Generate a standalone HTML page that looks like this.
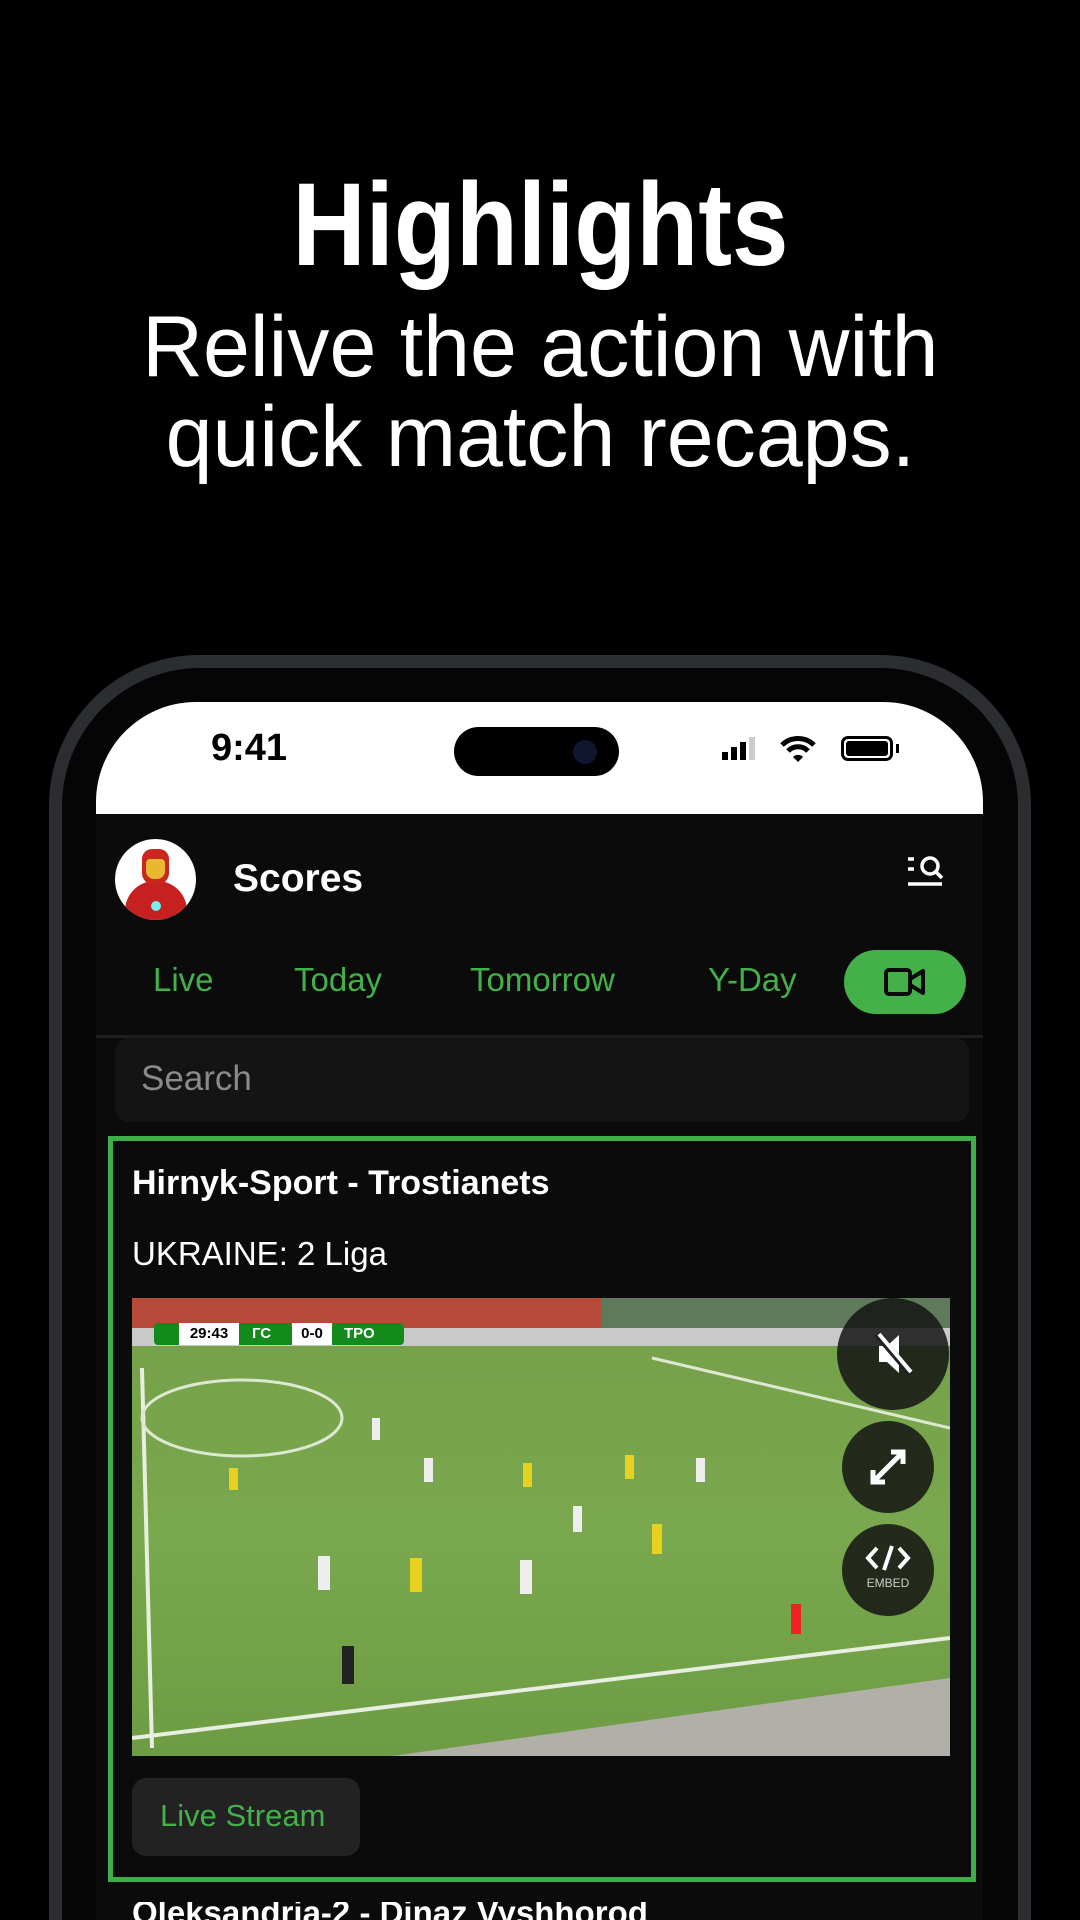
<!DOCTYPE html>
<html style="width:1080px;height:1920px;overflow:hidden"><head><meta charset="utf-8"><style>
*{margin:0;padding:0;box-sizing:border-box}
html,body{width:1080px;height:1920px;overflow:hidden}
body{background:#000;position:relative;font-family:"Liberation Sans",sans-serif;color:#fff}
.abs{position:absolute}
.t{position:absolute;left:0;width:1080px;text-align:center;white-space:nowrap}
.t span{display:inline-block}
</style></head><body>
<div class="t" style="top:160px;font-size:118px;font-weight:bold;line-height:130px"><span style="transform:scaleX(.86)">Highlights</span></div>
<div class="t" style="top:302px;font-size:86px;line-height:90px"><span style="transform:scaleX(.98)">Relive the action with</span></div>
<div class="t" style="top:392px;font-size:86px;line-height:90px"><span style="transform:scaleX(.98)">quick match recaps.</span></div>

<div class="abs" style="left:0;top:0;width:1080px;height:1920px;overflow:hidden">
<div class="abs" style="left:49px;top:655px;width:982px;height:1265px;border-radius:150px 150px 0 0;background:#2b2d30"></div>
<div class="abs" style="left:62px;top:668px;width:956px;height:1252px;border-radius:138px 138px 0 0;background:#050505"></div>
<div class="abs" style="left:96px;top:702px;width:887px;height:1218px;border-radius:100px 100px 0 0;background:#0b0b0b;overflow:hidden">
  <div class="abs" style="left:0;top:0;width:887px;height:112px;background:#fff"></div>
  <div class="abs" style="left:115px;top:25px;font-size:38px;font-weight:bold;color:#000">9:41</div>
  <div class="abs" style="left:358px;top:25px;width:165px;height:49px;border-radius:25px;background:#000"></div>
  <div class="abs" style="left:477px;top:38px;width:24px;height:24px;border-radius:12px;background:#101530"></div>
  <div class="abs" style="left:626px;top:50px;width:6px;height:8px;background:#000"></div>
  <div class="abs" style="left:635px;top:45px;width:6px;height:13px;background:#000"></div>
  <div class="abs" style="left:644px;top:40px;width:6px;height:18px;background:#000"></div>
  <div class="abs" style="left:653px;top:35px;width:6px;height:23px;background:#ccc"></div>
  <svg class="abs" style="left:684px;top:33px" width="36" height="28" viewBox="0 0 36 28"><path d="M2 10a23 23 0 0 1 32 0" stroke="#000" stroke-width="5" fill="none"/><path d="M8 16a14 14 0 0 1 20 0" stroke="#000" stroke-width="5" fill="none"/><path d="M13 22l5 5 5-5a7 7 0 0 0-10 0z" fill="#000"/></svg>
  <div class="abs" style="left:745px;top:34px;width:52px;height:25px;border:3px solid #000;border-radius:7px;padding:2px"><div style="width:100%;height:100%;background:#000;border-radius:3px"></div></div>
  <div class="abs" style="left:800px;top:42px;width:3px;height:9px;background:#000"></div>

  <div class="abs" style="left:19px;top:137px;width:81px;height:81px;border-radius:50%;background:#fff;overflow:hidden">
    <div class="abs" style="left:10px;top:42px;width:62px;height:45px;border-radius:30px 30px 0 0;background:#c62020"></div>
    <div class="abs" style="left:27px;top:10px;width:27px;height:36px;border-radius:10px 10px 12px 12px;background:#c9261d"></div>
    <div class="abs" style="left:31px;top:20px;width:19px;height:20px;border-radius:4px 4px 8px 8px;background:#e9b830"></div>
    <div class="abs" style="left:36px;top:62px;width:10px;height:10px;border-radius:50%;background:#7ee"></div>
  </div>
  <div class="abs" style="left:137px;top:155px;font-size:39px;font-weight:bold;color:#fff">Scores</div>
  <svg class="abs" style="left:810px;top:152px" width="40" height="36" viewBox="0 0 40 36"><path d="M2 5h6M2 15h6M2 30h34" stroke="#fff" stroke-width="3.5"/><circle cx="24" cy="12" r="8" stroke="#fff" stroke-width="3.5" fill="none"/><path d="M30 18l6 6" stroke="#fff" stroke-width="3.5"/></svg>

  <div class="abs" style="top:259px;font-size:33px;color:#43b04a;left:57px">Live</div>
  <div class="abs" style="top:259px;font-size:33px;color:#43b04a;left:198px">Today</div>
  <div class="abs" style="top:259px;font-size:33px;color:#43b04a;left:374px">Tomorrow</div>
  <div class="abs" style="top:259px;font-size:33px;color:#43b04a;left:612px">Y-Day</div>
  <div class="abs" style="left:748px;top:248px;width:122px;height:64px;border-radius:32px;background:#43b04a"></div>
  <svg class="abs" style="left:788px;top:265px" width="42" height="30" viewBox="0 0 42 30"><rect x="2" y="3" width="24" height="24" rx="3" stroke="#0b0b0b" stroke-width="4" fill="none"/><path d="M26 12l13-8v22l-13-8z" stroke="#0b0b0b" stroke-width="4" fill="none" stroke-linejoin="round"/></svg>
  <div class="abs" style="left:0;top:333px;width:887px;height:3px;background:#1e1e1e"></div>

  <div class="abs" style="left:19px;top:336px;width:854px;height:84px;border-radius:14px;background:#141414"></div>
  <div class="abs" style="left:45px;top:357px;font-size:35px;color:#8a8a8a">Search</div>

  <div class="abs" style="left:12px;top:434px;width:868px;height:746px;border:5px solid #3fae49;background:#0b0b0b"></div>
  <div class="abs" style="left:36px;top:462px;font-size:34px;font-weight:bold;color:#fff">Hirnyk-Sport - Trostianets</div>
  <div class="abs" style="left:36px;top:533px;font-size:33px;color:#fff">UKRAINE: 2 Liga</div>

  <div class="abs" style="left:36px;top:596px;width:818px;height:458px;overflow:hidden;background:linear-gradient(180deg,#8aa0a0 0%,#a3a3a3 5%,#76a14a 9%,#7aa84e 50%,#6e9c44 100%)">
    <div class="abs" style="left:0;top:0;width:470px;height:30px;background:#b84a3a"></div>
    <div class="abs" style="left:470px;top:0;width:348px;height:30px;background:#5e7a5a"></div>
    <div class="abs" style="left:0;top:30px;width:818px;height:18px;background:#c9c9c9"></div>
    <svg class="abs" style="left:0;top:0" width="818" height="458" viewBox="0 0 818 458">
      <path d="M10 70 L20 450" stroke="#e8eee0" stroke-width="4"/>
      <path d="M0 440 L818 340" stroke="#e8eee0" stroke-width="4"/>
      <ellipse cx="110" cy="120" rx="100" ry="38" stroke="#dde8d0" stroke-width="3" fill="none"/>
      <path d="M520 60 L818 130" stroke="#dde8d0" stroke-width="3"/>
      <path d="M260 458 L818 380 L818 458z" fill="#b0b0a8"/>
    </svg>
    <div class="abs" style="left:22px;top:25px;width:250px;height:22px;background:#138a1c;border-radius:4px"></div>
    <div class="abs" style="left:47px;top:25px;width:60px;height:22px;background:#fff;color:#000;font-size:15px;font-weight:bold;text-align:center;line-height:22px">29:43</div>
    <div class="abs" style="left:120px;top:25px;font-size:15px;font-weight:bold;line-height:22px">ГС</div>
    <div class="abs" style="left:160px;top:25px;width:40px;height:22px;background:#fff;color:#000;font-size:15px;font-weight:bold;text-align:center;line-height:22px">0-0</div>
    <div class="abs" style="left:212px;top:25px;font-size:15px;font-weight:bold;line-height:22px">ТРО</div>
    <div class="abs" style="left:240px;top:120px;width:8px;height:22px;background:#eee"></div>
    <div class="abs" style="left:97px;top:170px;width:9px;height:22px;background:#e6d020"></div>
    <div class="abs" style="left:391px;top:165px;width:9px;height:24px;background:#e6d020"></div>
    <div class="abs" style="left:493px;top:157px;width:9px;height:24px;background:#e6d020"></div>
    <div class="abs" style="left:564px;top:160px;width:9px;height:24px;background:#eee"></div>
    <div class="abs" style="left:292px;top:160px;width:9px;height:24px;background:#eee"></div>
    <div class="abs" style="left:441px;top:208px;width:9px;height:26px;background:#eee"></div>
    <div class="abs" style="left:520px;top:226px;width:10px;height:30px;background:#e6d020"></div>
    <div class="abs" style="left:186px;top:258px;width:12px;height:34px;background:#eee"></div>
    <div class="abs" style="left:278px;top:260px;width:12px;height:34px;background:#e6d020"></div>
    <div class="abs" style="left:388px;top:262px;width:12px;height:34px;background:#eee"></div>
    <div class="abs" style="left:210px;top:348px;width:12px;height:38px;background:#222"></div>
    <div class="abs" style="left:659px;top:306px;width:10px;height:30px;background:#e22"></div>
    <div class="abs" style="left:705px;top:0;width:112px;height:112px;border-radius:50%;background:rgba(20,20,20,.85)"></div>
    <svg class="abs" style="left:741px;top:32px" width="42" height="48" viewBox="0 0 42 48"><path d="M6 16h8l12-11v38l-12-11H6z" fill="#fff"/><path d="M4 4l34 40" stroke="#222" stroke-width="7"/><path d="M6 4l32 38" stroke="#fff" stroke-width="4"/></svg>
    <div class="abs" style="left:710px;top:123px;width:92px;height:92px;border-radius:50%;background:rgba(20,20,20,.85)"></div>
    <svg class="abs" style="left:735px;top:148px" width="42" height="42" viewBox="0 0 42 42"><path d="M6 36L36 6M24 6h12v12M6 24v12h12" stroke="#fff" stroke-width="5" fill="none"/></svg>
    <div class="abs" style="left:710px;top:226px;width:92px;height:92px;border-radius:50%;background:rgba(20,20,20,.85)"></div>
    <svg class="abs" style="left:733px;top:246px" width="46" height="28" viewBox="0 0 46 28"><path d="M12 4L3 14l9 10M34 4l9 10-9 10M27 2L19 26" stroke="#fff" stroke-width="4" fill="none"/></svg>
    <div class="abs" style="left:710px;top:278px;width:92px;text-align:center;font-size:12px;color:#ccc">EMBED</div>
  </div>

  <div class="abs" style="left:36px;top:1076px;width:228px;height:78px;border-radius:14px;background:#222"></div>
  <div class="abs" style="left:64px;top:1096px;font-size:31px;color:#43b04a">Live Stream</div>

  <div class="abs" style="left:36px;top:1200px;font-size:33px;line-height:18px;height:18px;overflow:hidden;font-weight:bold;color:#fff;padding-top:0"><span style="position:relative;top:2px">Oleksandria-2 - Dinaz Vyshhorod</span></div>
</div>
</div>
</body></html>
